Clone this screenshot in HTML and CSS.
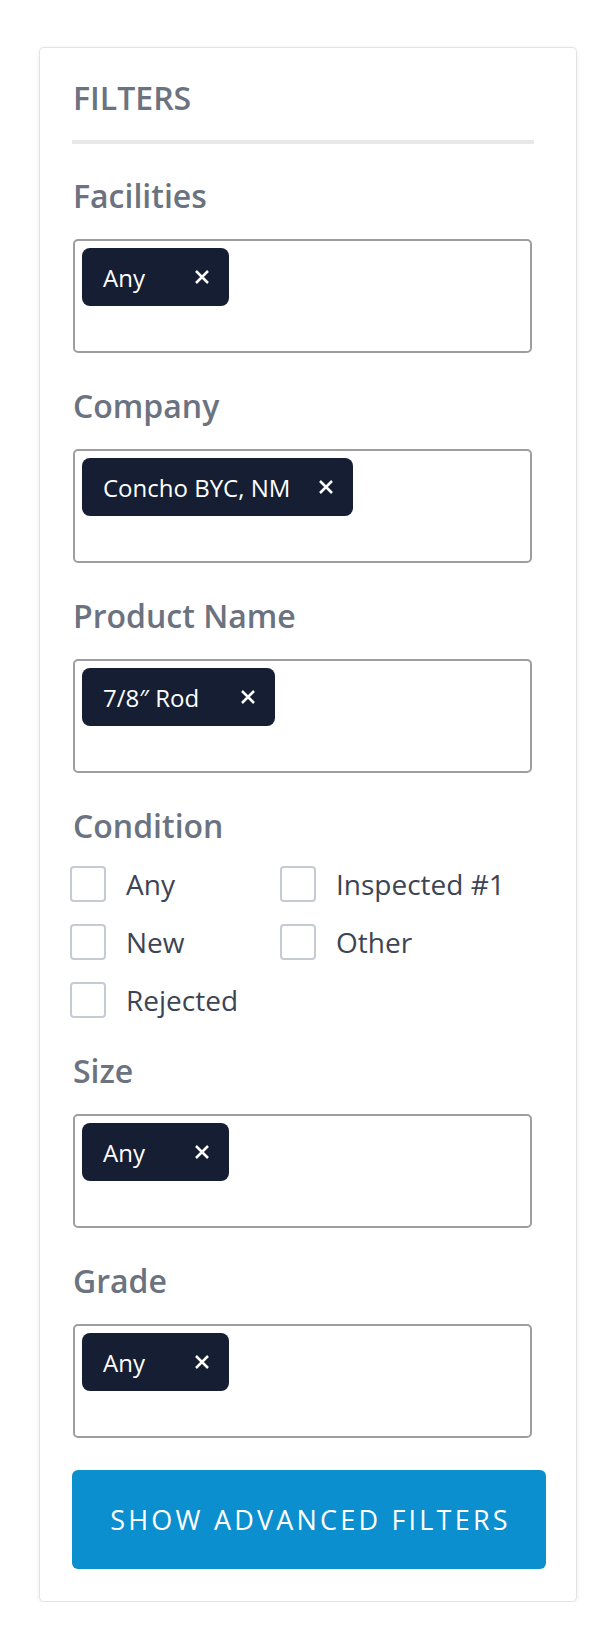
FILE: index.html
```html
<!DOCTYPE html>
<html lang="en">
<head>
<meta charset="utf-8">
<title>Filters</title>
<link rel="stylesheet" href="styles.css">
</head>
<body>
<aside class="card">
  <h2 class="heading">FILTERS</h2>
  <div class="divider"></div>

  <section class="field">
    <div class="label">Facilities</div>
    <div class="select">
      <span class="chip chip-any"><span class="chip-text">Any</span>
        <svg class="x" viewBox="0 0 16 16"><path d="M2 2L14 14M14 2L2 14"/></svg></span>
    </div>
  </section>

  <section class="field">
    <div class="label">Company</div>
    <div class="select">
      <span class="chip chip-concho"><span class="chip-text">Concho BYC, NM</span>
        <svg class="x" viewBox="0 0 16 16"><path d="M2 2L14 14M14 2L2 14"/></svg></span>
    </div>
  </section>

  <section class="field">
    <div class="label">Product Name</div>
    <div class="select">
      <span class="chip chip-rod"><span class="chip-text">7/8″ Rod</span>
        <svg class="x" viewBox="0 0 16 16"><path d="M2 2L14 14M14 2L2 14"/></svg></span>
    </div>
  </section>

  <section class="field">
    <div class="label label-cond">Condition</div>
    <div class="checks">
      <label class="check"><span class="box"></span><span>Any</span></label>
      <label class="check"><span class="box"></span><span>Inspected #1</span></label>
      <label class="check"><span class="box"></span><span>New</span></label>
      <label class="check"><span class="box"></span><span>Other</span></label>
      <label class="check"><span class="box"></span><span>Rejected</span></label>
    </div>
  </section>

  <section class="field">
    <div class="label">Size</div>
    <div class="select">
      <span class="chip chip-any"><span class="chip-text">Any</span>
        <svg class="x" viewBox="0 0 16 16"><path d="M2 2L14 14M14 2L2 14"/></svg></span>
    </div>
  </section>

  <section class="field">
    <div class="label">Grade</div>
    <div class="select">
      <span class="chip chip-any"><span class="chip-text">Any</span>
        <svg class="x" viewBox="0 0 16 16"><path d="M2 2L14 14M14 2L2 14"/></svg></span>
    </div>
  </section>

  <button class="advanced">SHOW ADVANCED FILTERS</button>
</aside>
</body>
</html>
```

FILE: styles.css
```css
html, body {
  margin: 0;
  padding: 0;
  background: #ffffff;
}

body {
  font-family: "Open Sans", "Noto Sans", sans-serif;
}

.card {
  box-sizing: border-box;
  width: 538px;
  margin: 47px 0 0 39px;
  padding: 30px 31px 32px 33px;
  background: #ffffff;
  border: 1px solid #e3e3e3;
  border-radius: 5px;
  box-shadow: 0 1px 4px rgba(0, 0, 0, 0.08);
}

.heading {
  margin: 0;
  font-size: 32px;
  line-height: 40px;
  font-weight: 600;
  color: #6b7280;
}

.divider {
  width: 462px;
  height: 4px;
  margin: 22px 0 0 -1px;
  background: #e8e8e8;
}

.field {
  margin-top: 33px;
}

.divider + .field {
  margin-top: 32px;
}

.label {
  font-size: 32px;
  line-height: 40px;
  font-weight: 600;
  color: #6b7280;
  margin-bottom: 23px;
}

.label-cond {
  margin-bottom: 20px;
}

.select {
  box-sizing: border-box;
  width: 459px;
  height: 114px;
  padding: 7px;
  border: 2px solid #9e9e9e;
  border-radius: 5px;
}

.chip {
  box-sizing: border-box;
  display: flex;
  align-items: center;
  justify-content: space-between;
  height: 58px;
  padding: 0 19px 0 21px;
  background: #161e33;
  border-radius: 8px;
  color: #ffffff;
  font-size: 24px;
}

.chip-any { width: 147px; }
.chip-rod { width: 193px; }
.chip-concho { width: 271px; }

.chip-text {
  white-space: nowrap;
}

.x {
  width: 16px;
  height: 16px;
  flex: none;
}

.x path {
  stroke: #ffffff;
  stroke-width: 2.5;
  stroke-linecap: butt;
  fill: none;
}

.checks {
  display: grid;
  grid-template-columns: 210px 210px;
  grid-auto-rows: 36px;
  row-gap: 22px;
  margin-left: -3px;
}

.check {
  display: flex;
  align-items: center;
  gap: 20px;
  font-size: 28px;
  color: #3d4453;
  white-space: nowrap;
}

.box {
  box-sizing: border-box;
  width: 36px;
  height: 36px;
  flex: none;
  border: 2px solid #c6cad2;
  border-radius: 4px;
  background: #ffffff;
}

.advanced {
  display: block;
  box-sizing: border-box;
  width: 474px;
  height: 99px;
  margin: 32px 0 0 -1px;
  padding: 0;
  border: none;
  border-radius: 6px;
  background: #0b8fce;
  color: #ffffff;
  font-family: "Open Sans", "Noto Sans", sans-serif;
  font-size: 27px;
  font-weight: 500;
  letter-spacing: 3.2px;
  text-indent: 3px;
}
```
